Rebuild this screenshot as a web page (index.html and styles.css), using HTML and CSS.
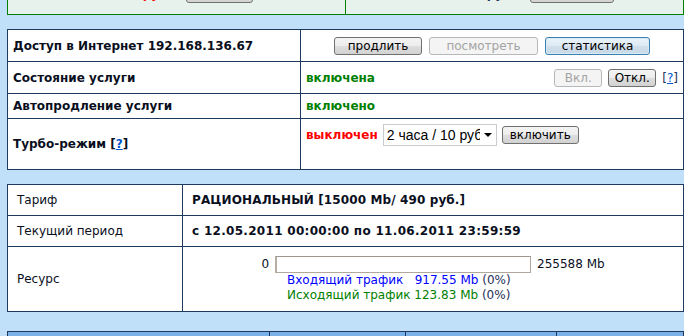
FILE: index.html
```html
<!DOCTYPE html>
<html lang="ru">
<head>
<meta charset="utf-8">
<title>Личный кабинет</title>
<link rel="stylesheet" href="styles.css">
</head>
<body>
<div class="page">
  <div class="box box-top">
    <div class="top-cell top-left">
      <span class="top-sum red">1020 руб.</span>
      <button class="btn btn-top-l">оплата</button>
    </div>
    <div class="top-cell top-right">
      <span class="top-sum navy">490 руб.</span>
      <button class="btn btn-top-r">пополнить</button>
    </div>
  </div>

  <div class="box grid-service">
    <div class="cell lbl b">Доступ в Интернет 192.168.136.67</div>
    <div class="cell val center">
      <button class="btn btn-a">продлить</button>
      <button class="btn btn-b" disabled>посмотреть</button>
      <button class="btn btn-c focus">статистика</button>
    </div>

    <div class="cell lbl b">Состояние услуги</div>
    <div class="cell val split">
      <span class="green b">включена</span>
      <span class="ctrls">
        <button class="btn small" disabled>Вкл.</button>
        <button class="btn small">Откл.</button>
        <span class="help">[<a href="#">?</a>]</span>
      </span>
    </div>

    <div class="cell lbl b">Автопродление услуги</div>
    <div class="cell val"><span class="green b">включено</span></div>

    <div class="cell lbl b last">Турбо-режим [<a href="#">?</a>]</div>
    <div class="cell val last turbo">
      <span class="red b">выключен</span>
      <span class="select-wrap">
        <select class="sel">
          <option>2 часа / 10 руб.</option>
          <option>6 часов / 25 руб.</option>
        </select>
        <span class="sel-arrow"></span>
      </span>
      <button class="btn btn-on">включить</button>
    </div>
  </div>

  <div class="box grid-tariff">
    <div class="cell lbl2">Тариф</div>
    <div class="cell val2 b wide1">РАЦИОНАЛЬНЫЙ [15000 Mb/ 490 руб.]</div>

    <div class="cell lbl2">Текущий период</div>
    <div class="cell val2 b wide2">с 12.05.2011 00:00:00 по 11.06.2011 23:59:59</div>

    <div class="cell lbl2 last">Ресурс</div>
    <div class="cell val2 last res">
      <div class="res-grid">
        <span class="res-min">0</span>
        <span class="bar"></span>
        <span class="res-max">255588 Mb</span>
        <div class="traffic">
          <div><span class="blue">Входящий трафик&nbsp;&nbsp; 917.55 Mb</span> (0%)</div>
          <div><span class="green">Исходящий трафик 123.83 Mb</span> (0%)</div>
        </div>
      </div>
    </div>
  </div>

  <div class="box grid-bottom">
    <div class="bcell"></div>
    <div class="bcell"></div>
    <div class="bcell"></div>
    <div class="bcell"></div>
  </div>
</div>
</body>
</html>
```

FILE: styles.css
```css
* { box-sizing: border-box; }

html, body {
  margin: 0;
  padding: 0;
  background: #c0dff8;
  overflow: hidden;
}

body {
  font-family: "DejaVu Sans", Verdana, sans-serif;
  font-size: 12px;
  color: #000;
}

.page {
  padding-left: 7px;
  width: 684px;
}

.box {
  width: 677px;
  border: 1px solid #1e3a5f;
  background: #fff;
}

/* top (green) block, mostly scrolled off */
.box-top {
  margin-top: -26px;
  height: 41px;
  border-color: #008000;
  background: #e8f2ec;
  display: grid;
  grid-template-columns: 338px 1fr;
}

.top-cell {
  display: flex;
  align-items: baseline;
  justify-content: flex-end;
  gap: 14px;
  padding-top: 10px;
}

.top-left {
  border-right: 1px solid #008000;
  padding-right: 92px;
}

.top-right {
  padding-right: 69px;
}

.top-sum { font-weight: bold; }

.btn.btn-top-l { width: 67px; padding: 0; }
.btn.btn-top-r { width: 84px; padding: 0; }

.red { color: #ff0000; }
.navy { color: #1e2f5a; }
.green { color: #008000; }
.blue { color: #0000ff; }
.b { font-weight: bold; }

/* service block */
.grid-service {
  margin-top: 14px;
  display: grid;
  grid-template-columns: 293px 1fr;
  grid-template-rows: 32px 32px 25px 50px;
}

.cell {
  border-bottom: 1px solid #1e3a5f;
  display: flex;
  align-items: center;
  color: #0a0f1e;
}

.cell.last { border-bottom: none; }

.lbl {
  border-right: 1px solid #1e3a5f;
  padding-left: 5px;
}

.val { padding: 0 5px; }

.center { justify-content: center; gap: 7px; }

.split { justify-content: space-between; }

.ctrls {
  display: flex;
  align-items: center;
  gap: 6px;
}

.help { color: #1e2f5a; }

a { color: #0055cc; }

.turbo {
  align-items: flex-start;
  padding-top: 5px;
  gap: 5px;
}

.turbo .red { line-height: 22px; }

/* buttons */
.btn {
  font-family: "DejaVu Sans", Verdana, sans-serif;
  font-size: 12px;
  height: 18px;
  padding: 0 14px;
  border: 1px solid #707070;
  border-radius: 3px;
  background: linear-gradient(#f4f4f4, #ececec 50%, #dedede 50%, #d2d2d2);
  color: #000;
  line-height: 14px;
}

.btn.btn-a { width: 88px; padding: 0; }
.btn.btn-b { width: 109px; padding: 0; }
.btn.btn-c { width: 105px; padding: 0; }

.btn.small { width: 48px; padding: 0; }

.btn.btn-on { width: 77px; padding: 0; }

.btn:disabled {
  border-color: #b5b8bb;
  background: #f4f4f4;
  color: #a3a3a3;
}

.btn.focus {
  border-color: #3c7fb1;
  background: linear-gradient(#eaf4fb, #dde9f3 50%, #d1dfeb 50%, #c8d8e6);
  box-shadow: inset 0 0 0 1px #d8ecf8;
}

.turbo .btn { margin-top: 2px; }

/* select */
.select-wrap {
  position: relative;
  display: inline-block;
  height: 22px;
}

.sel {
  appearance: none;
  -webkit-appearance: none;
  width: 114px;
  height: 22px;
  border: 1px solid #c8cbd0;
  border-radius: 0;
  background: #fff;
  font-family: "Liberation Sans", Arial, sans-serif;
  font-size: 14px;
  color: #000;
  padding: 0 14px 0 3px;
  overflow: hidden;
  white-space: nowrap;
}

.sel-arrow {
  position: absolute;
  right: 1px;
  top: 1px;
  bottom: 1px;
  width: 16px;
  background: #fff;
  pointer-events: none;
}

.sel-arrow::after {
  content: "";
  position: absolute;
  left: 4px;
  top: 8px;
  border-left: 4px solid transparent;
  border-right: 4px solid transparent;
  border-top: 4px solid #000;
}

/* tariff block */
.grid-tariff {
  margin-top: 14px;
  display: grid;
  grid-template-columns: 175px 1fr;
  grid-template-rows: 31px 31px 64px;
}

.lbl2 {
  border-right: 1px solid #1e3a5f;
  padding-left: 9px;
}

.val2 { padding-left: 9px; }

.wide1 { letter-spacing: 0.12px; }
.wide2 { letter-spacing: 0.3px; }

.res { justify-content: center; padding-left: 0; }

.res-grid {
  display: grid;
  grid-template-columns: auto 256px auto;
  column-gap: 6px;
  align-items: center;
}

.bar {
  display: block;
  height: 17px;
  border: 1px solid #b2a79c;
  border-top-color: #a0958a;
  border-left: 2px solid #b7ada3;
  background: #fff;
}

.traffic {
  grid-column: 2 / 4;
  padding-left: 12px;
  line-height: 15px;
  color: #1e2f5a;
}

/* bottom block */
.grid-bottom {
  margin-top: 19px;
  height: 60px;
  background: #7ab1e8;
  display: grid;
  grid-template-columns: 262px 136px 151px 1fr;
}

.bcell { border-right: 1px solid #1e3a5f; }
.bcell:last-child { border-right: none; }
```
